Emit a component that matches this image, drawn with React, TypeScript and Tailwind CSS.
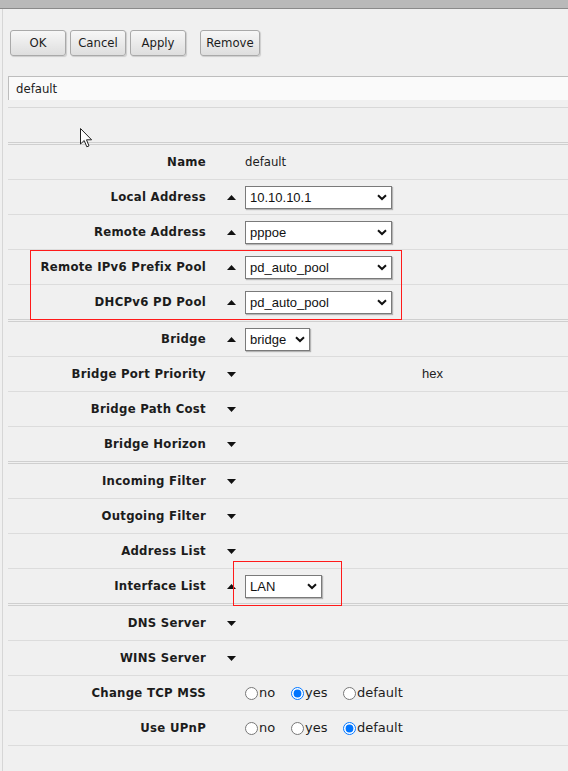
import React from 'react'

const label = "font-['DejaVu_Sans_Condensed','DejaVu_Sans',sans-serif] font-bold text-[13px] tracking-[0.28px] text-[#1c1c1c]"
const tahoma = "font-['DejaVu_Sans_Condensed','DejaVu_Sans',sans-serif] text-[13px] text-[#1c1c1c]"
const verdana = "font-['DejaVu_Sans',sans-serif] text-[13px] text-[#1c1c1c]"
const arial = "font-['Liberation_Sans',Arial,sans-serif] text-[13px] text-[#111]"

type Row = {
  name: string
  arrow?: 'up' | 'down'
  kind?: 'text' | 'select' | 'radio' | 'hex'
  value?: string
  width?: number
  checked?: number
  last?: boolean
}

const rows: Row[] = [
  { name: 'Name', kind: 'text', value: 'default' },
  { name: 'Local Address', arrow: 'up', kind: 'select', value: '10.10.10.1', width: 147 },
  { name: 'Remote Address', arrow: 'up', kind: 'select', value: 'pppoe', width: 147 },
  { name: 'Remote IPv6 Prefix Pool', arrow: 'up', kind: 'select', value: 'pd_auto_pool', width: 147 },
  { name: 'DHCPv6 PD Pool', arrow: 'up', kind: 'select', value: 'pd_auto_pool', width: 147, last: true },
  { name: 'Bridge', arrow: 'up', kind: 'select', value: 'bridge', width: 65 },
  { name: 'Bridge Port Priority', arrow: 'down', kind: 'hex' },
  { name: 'Bridge Path Cost', arrow: 'down' },
  { name: 'Bridge Horizon', arrow: 'down', last: true },
  { name: 'Incoming Filter', arrow: 'down' },
  { name: 'Outgoing Filter', arrow: 'down' },
  { name: 'Address List', arrow: 'down' },
  { name: 'Interface List', arrow: 'up', kind: 'select', value: 'LAN', width: 77, last: true },
  { name: 'DNS Server', arrow: 'down' },
  { name: 'WINS Server', arrow: 'down' },
  { name: 'Change TCP MSS', kind: 'radio', checked: 1 },
  { name: 'Use UPnP', kind: 'radio', checked: 2 },
]

function Arrow({ dir }: { dir: 'up' | 'down' }) {
  return (
    <svg width="9" height="5" viewBox="0 0 9 5" className="block">
      {dir === 'up' ? <path d="M4.5 0 L9 5 L0 5 Z" fill="#111" /> : <path d="M0 0 L9 0 L4.5 5 Z" fill="#111" />}
    </svg>
  )
}

function Select({ value, width }: { value: string; width: number }) {
  return (
    <div
      className="h-[23px] bg-white border border-[#7a7a7a] shadow-[1px_1px_1px_rgba(0,0,0,0.25)] flex items-center pl-[4px] pr-[4px]"
      style={{ width }}
    >
      <span className={`${arial} flex-1 leading-none`}>{value}</span>
      <svg width="10" height="7" viewBox="0 0 10 7">
        <path d="M1 1.2 L5 5 L9 1.2" fill="none" stroke="#111" strokeWidth="2" />
      </svg>
    </div>
  )
}

function Radios({ checked }: { checked: number }) {
  const opts = ['no', 'yes', 'default']
  const widths = ['w-[46px]', 'w-[52px]', '']
  return (
    <div className="flex items-center">
      {opts.map((o, i) => (
        <label key={o} className={`flex items-center ${widths[i]}`}>
          <input
            type="radio"
            readOnly
            checked={i === checked}
            className="m-0 w-[13px] h-[13px] accent-[#0075ff]"
          />
          <span className={`${verdana} ml-[1px]`}>{o}</span>
        </label>
      ))}
    </div>
  )
}

export default function App() {
  return (
    <div className="relative w-[568px] h-[771px] overflow-hidden bg-[#f0f0f0]">
      <div className="h-[9px] bg-[#b9b9b9] border-b border-[#8a8a8a]" />

      <div className="ml-[2px] border-l border-[#d6d6d6] pl-[5px] h-[762px]">
        {/* Buttons */}
        <div className="pt-[21px] flex items-center pl-[2px]">
          {['OK', 'Cancel', 'Apply'].map((b) => (
            <button
              key={b}
              className={`${tahoma} h-[26px] w-[56px] mr-[4px] rounded-[3px] border border-[#a9a9a9] bg-gradient-to-b from-[#f7f7f7] to-[#dedede] shadow-[1px_1px_1px_rgba(0,0,0,0.15)]`}
            >
              {b}
            </button>
          ))}
          <button
            className={`${tahoma} h-[26px] w-[60px] ml-[10px] rounded-[3px] border border-[#a9a9a9] bg-gradient-to-b from-[#f7f7f7] to-[#dedede] shadow-[1px_1px_1px_rgba(0,0,0,0.15)]`}
          >
            Remove
          </button>
        </div>

        {/* Title field */}
        <div className="mt-[20px] h-[24px] bg-[#fafafa] border-t border-l border-[#bdbdbd] flex items-center pl-[7px]">
          <span className={`${tahoma} leading-none pb-[1px]`}>default</span>
        </div>
        <div className="h-[8px] border-b border-[#d8d8d8]" />
        <div className="h-[37px] border-b-[3px] border-double border-[#cfcfcf]" />

        {/* Form rows */}
        {rows.map((r) => (
          <div
            key={r.name}
            className={`flex items-center ${
              r.last ? 'h-[37px] border-b-[3px] border-double border-[#cfcfcf]' : 'h-[35px] border-b border-[#dcdcdc]'
            }`}
          >
            <div className={`${label} w-[198px] text-right whitespace-nowrap`}>{r.name}</div>
            <div className="w-[39px] pl-[21px]">{r.arrow && <Arrow dir={r.arrow} />}</div>
            {r.kind === 'text' && <span className={tahoma}>{r.value}</span>}
            {r.kind === 'select' && <Select value={r.value!} width={r.width!} />}
            {r.kind === 'radio' && <Radios checked={r.checked!} />}
            {r.kind === 'hex' && <span className={`${arial} ml-[177px] text-[#222]`}>hex</span>}
          </div>
        ))}
      </div>

      {/* Annotation boxes */}
      <div className="absolute z-10 left-[30px] top-[250px] w-[372px] h-[70px] border border-[#ff1a1a]" />
      <div className="absolute z-10 left-[233px] top-[561px] w-[109px] h-[45px] border border-[#ff1a1a]" />

      {/* Mouse cursor */}
      <svg className="absolute z-10 left-[80px] top-[128px]" width="13" height="20" viewBox="0 0 13 20">
        <path
          d="M0.5 0.5 L0.5 16 L4.2 12.5 L6.8 18.8 L9 17.9 L6.5 11.8 L11.6 11.8 Z"
          fill="#fff"
          stroke="#222"
          strokeWidth="1"
          strokeLinejoin="round"
        />
      </svg>
    </div>
  )
}
